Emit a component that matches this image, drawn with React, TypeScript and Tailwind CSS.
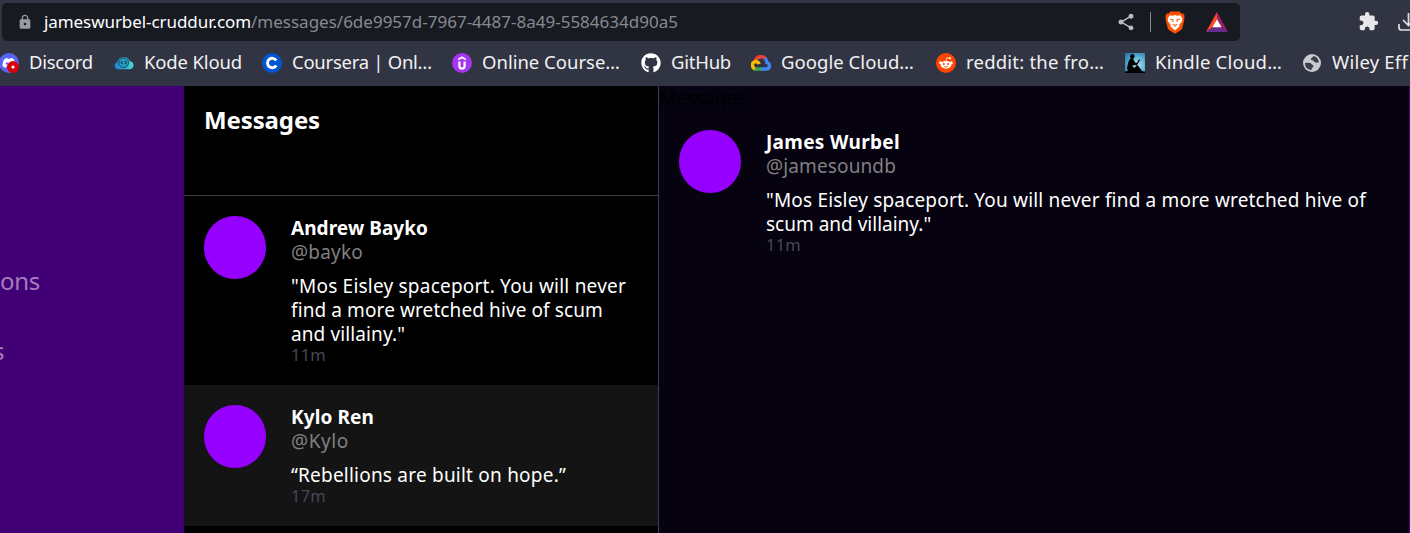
import type { ReactNode } from 'react';
import { FaDiscord, FaGithub } from 'react-icons/fa';
import { MdExtension, MdLock, MdShare } from 'react-icons/md';

function DiscordIcon() {
  return (
    <div className="relative size-5 rounded-full bg-[#5865f2]">
      <FaDiscord className="absolute top-[3px] left-[3px] size-[14px] text-white" />
      <svg className="absolute top-[8px] left-[8px] size-3" viewBox="0 0 12 12">
        <circle cx="6" cy="6" r="6" fill="#d8000c" />
        <circle cx="6" cy="6" r="1.6" fill="#fff" />
      </svg>
    </div>
  );
}

function KodeKloudIcon() {
  return (
    <svg viewBox="0 0 20 20" className="size-5">
      <defs>
        <linearGradient id="kk" x1="0" x2="1">
          <stop offset="0" stopColor="#1c86d8" />
          <stop offset="0.55" stopColor="#27a9cf" />
          <stop offset="1" stopColor="#4fe0cf" />
        </linearGradient>
      </defs>
      <path d="M3.600 16.200A3.600 3.600 0 0 1 3.200 9.200 6.600 6.600 0 0 1 15.800 8.300a4 4 0 0 1 .4 7.900Z" fill="url(#kk)" />
      <circle cx="9.700" cy="9.700" r="4.800" fill="#22a3c2" stroke="#244658" strokeWidth="1" />
      <path d="m8.700 8.200-1.500 1.500 1.500 1.500M10.800 8.200l1.500 1.500-1.500 1.500" stroke="#20394b" strokeWidth="1.100" fill="none" />
    </svg>
  );
}

function CourseraIcon() {
  return (
    <svg viewBox="0 0 20 20" className="size-5">
      <circle cx="10" cy="10" r="10" fill="#0056d2" />
      <path d="M14.200 7.500A4.700 4.700 0 1 0 14.200 12.500" stroke="#fff" strokeWidth="2.900" fill="none" />
    </svg>
  );
}

function UdemyIcon() {
  return (
    <svg viewBox="0 0 20 20" className="size-5">
      <circle cx="10" cy="10" r="10" fill="#a435f0" />
      <path d="M6.300 6.500 10 4.200l3.700 2.300" stroke="#fff" strokeWidth="1.700" fill="none" />
      <path d="M7.400 8.500v4.400a2.600 2.600 0 0 0 5.200 0V8.500" stroke="#fff" strokeWidth="2.200" fill="none" />
    </svg>
  );
}

function GoogleCloudIcon() {
  return (
    <svg viewBox="0 0 20 20" className="size-5" fill="none" strokeWidth="3.500">
      <path d="M4.400 7.600A6.100 6.100 0 0 1 14.600 5.700" stroke="#ea4335" />
      <path d="M14 5.200a6 6 0 0 1 1.800 4.200 3.400 3.400 0 0 1-.5 6.700H10" stroke="#4285f4" />
      <path d="M10.300 16.100H5.400a3.500 3.500 0 0 1-2-.6" stroke="#34a853" />
      <path d="M4 15.700A3.600 3.600 0 1 1 8.300 11" stroke="#fbbc04" />
    </svg>
  );
}

function RedditIcon() {
  return (
    <svg viewBox="0 0 20 20" className="size-5">
      <circle cx="10" cy="10" r="10" fill="#ff4500" />
      <circle cx="4.700" cy="9.700" r="1.500" fill="#fff" />
      <circle cx="15.300" cy="9.700" r="1.500" fill="#fff" />
      <ellipse cx="10" cy="11.800" rx="5.400" ry="3.900" fill="#fff" />
      <path d="m10 8.200.8-3.500 3 .6" stroke="#fff" strokeWidth=".8" fill="none" />
      <circle cx="14" cy="5.300" r="1.100" fill="#fff" />
      <circle cx="7.800" cy="11" r="1" fill="#ff4500" />
      <circle cx="12.200" cy="11" r="1" fill="#ff4500" />
      <path d="M7.800 13.400q2.200 1.400 4.400 0" stroke="#ff4500" strokeWidth=".8" fill="none" />
    </svg>
  );
}

function KindleIcon() {
  return (
    <svg viewBox="0 0 20 20" className="size-5">
      <defs>
        <radialGradient id="kd" cx=".6" cy=".6" r=".75">
          <stop offset="0" stopColor="#b5e4f2" />
          <stop offset=".5" stopColor="#62b7da" />
          <stop offset="1" stopColor="#237ba8" />
        </radialGradient>
      </defs>
      <path d="M0 0h20v20H0z" fill="url(#kd)" />
      <path d="M0 18.500q5-1.500 10-1t10 1V20H0z" />
      <circle cx="7.300" cy="3.400" r="2.300" />
      <path d="M5 5.500 3.400 9 2 15l1 3h10l4.500.6-5-6.600-3.500 3-2-2.500 3.500-.5 2.500-1.500-3-1-2-4z" />
      <path d="m11 12.500 3.600-5.800" stroke="#000" strokeWidth="1.400" />
    </svg>
  );
}

function GlobeIcon() {
  return (
    <svg viewBox="0 0 20 20" className="size-5">
      <circle cx="10" cy="10" r="9" fill="#c9cbd0" />
      <path d="M3 10c2.500-.3 5.200-.6 6.300.8s2.200.8 2 2.400-1.800 1-1.800 3.800C5 16.800 2.800 13.500 3 10ZM11.500 3C11 4.800 8.800 4.500 8.900 6.200s2.400.8 3.200 2.300 2.300 1.300 4.900.8C16.500 6 14.500 3.500 11.500 3Z" fill="#3b3e4b" />
    </svg>
  );
}

function BraveIcon() {
  return (
    <svg viewBox="0 0 20 23" className="h-[23px] w-5">
      <path d="M5.500.5h9L16.300 2.500h1.800L19.700 5l-.6 2 .4 1-2.200 9q-.4 1.500-1.600 2.300L10 22.800 4.300 19.300Q3.100 18.500 2.700 17L.5 8l.4-1-.6-2 1.600-2.500h1.800Z" fill="#ff5000" />
      <path d="M4.700 4.200 8 4.700l2-.6 2 .6 3.300-.5 2.100 3.300-.5 1.200.4 1.200-3.200 4.200.5 1.500-1.300.9L10 19.400l-3.300-2.900-1.300-.9.500-1.500-3.200-4.200.4-1.200-.5-1.200Z" fill="#fff" />
      <path d="M5 8 8.200 8.800l-.5 2.200M15 8l-3.200.8.5 2.200M7.700 13.400l2.300.9 2.300-.9M10 14.300v1.500" stroke="#ff5000" strokeWidth="1" fill="none" />
    </svg>
  );
}

function RewardsIcon() {
  return (
    <svg viewBox="0 0 22 20" className="h-5 w-[22px]">
      <path d="M11 0 0 20l7-5L11 7.500Z" fill="#ff4724" />
      <path d="M11 0 22 20l-7-5L11 7.500Z" fill="#9e1f63" />
      <path d="M0 20h22l-7-5H7Z" fill="#662d91" />
      <path d="m11 7.200 4.600 8.100H6.400Z" fill="#fff" />
    </svg>
  );
}

function Bookmark({ icon, label, className }: { icon: ReactNode; label: string; className: string }) {
  return (
    <div className={`flex shrink-0 items-center whitespace-nowrap ${className}`}>
      <span className="mr-[10px] shrink-0">{icon}</span>
      <span className="pb-[2px]">{label}</span>
    </div>
  );
}

type MessageProps = { name: ReactNode; handle: ReactNode; time: string; children: ReactNode; className?: string };

function Message({ name, handle, time, children, className = '' }: MessageProps) {
  return (
    <article className={`flex gap-[25px] p-5 ${className}`}>
      <div className="h-[63px] w-[62px] shrink-0 rounded-full bg-[#9500ff]" />
      <div className="min-w-0 flex-1 whitespace-nowrap text-[19px] leading-6 text-white">
        <div className="font-bold">{name}</div>
        <div className="mb-[10px] text-[#808080]">{handle}</div>
        {children}
        <div className="h-[19px] text-[16.5px] leading-[17px] tracking-[0.23px] text-[#464858]">{time}</div>
      </div>
    </article>
  );
}

export default function App() {
  return (
    <div className="flex h-[533px] w-[1410px] flex-col overflow-hidden bg-[#313442] font-['Noto_Sans',sans-serif]">
      <div className="flex h-[41px] shrink-0 items-end">
        <div className="ml-[2px] flex h-[38px] w-[1238px] shrink-0 items-center rounded-[5px] bg-[#181a21] text-[17px]">
          <MdLock className="ml-[15px] size-4 text-[#9a9ca4]" />
          <span className="ml-[11px] w-[207px] whitespace-nowrap tracking-[-0.071px] text-white">jameswurbel-cruddur.com</span>
          <span className="whitespace-nowrap text-[#868a92]">/messages/6de9957d-7967-4487-8a49-5584634d90a5</span>
          <div className="ml-auto flex items-center">
            <MdShare className="size-5 text-[#bcbdc0]" />
            <div className="ml-[14px] h-5 w-px bg-[#8a8c92]" />
            <div className="ml-[14px]"><BraveIcon /></div>
            <div className="mr-[12px] ml-[21px]"><RewardsIcon /></div>
          </div>
        </div>
        <MdExtension className="mb-[9px] ml-[118px] size-[21px] shrink-0 text-[#e8e8ea]" />
        <svg viewBox="0 0 20 20" className="mb-[9px] ml-[19px] size-5 shrink-0" fill="none" stroke="#e0e0e3" strokeWidth="1.700">
          <path d="M1 12v3.500Q1 18 3.500 18h13M10.500 1v12M5 8l5.500 5.500L16 8" />
        </svg>
      </div>
      <nav className="flex h-[45px] shrink-0 items-center pb-px text-[18.5px] text-[#f1f1f3]">
        <Bookmark icon={<DiscordIcon />} label="Discord" className="-ml-px w-[115px] tracking-[-0.27px]" />
        <Bookmark icon={<KodeKloudIcon />} label="Kode Kloud" className="w-[148px] tracking-[-0.15px]" />
        <Bookmark icon={<CourseraIcon />} label="Coursera | Onl…" className="w-[190px] tracking-[-0.27px]" />
        <Bookmark icon={<UdemyIcon />} label="Online Course…" className="w-[189px]" />
        <Bookmark icon={<FaGithub className="size-5 text-white" />} label="GitHub" className="w-[110px] tracking-[-0.24px]" />
        <Bookmark icon={<GoogleCloudIcon />} label="Google Cloud…" className="w-[185px] tracking-[0.05px]" />
        <Bookmark icon={<RedditIcon />} label="reddit: the fro…" className="w-[189px] tracking-[0.22px]" />
        <Bookmark icon={<KindleIcon />} label="Kindle Cloud…" className="w-[177px] tracking-[0.22px]" />
        <Bookmark icon={<GlobeIcon />} label="Wiley Eff" className="w-[120px] tracking-[0.21px]" />
      </nav>
      <main className="flex min-h-0 flex-1">
        <aside className="flex w-[184px] shrink-0 flex-col gap-[34px] bg-[#420077] pt-[177px] text-2xl leading-9 text-[#a27fbb]">
          <div className="tracking-[-0.28px]">ons</div>
          <div className="-ml-[7px]">s</div>
        </aside>
        <section className="w-[475px] shrink-0 border-r border-[#3b3d49] bg-black">
          <header className="h-[110px] border-b border-[#3b3d49] px-5 pt-[19px] text-2xl leading-[30px] font-bold tracking-[-0.12px] text-white">
            Messages
          </header>
          <Message
            name={<span className="tracking-[0.06px]">Andrew Bayko</span>}
            handle={<span className="tracking-[0.21px]">@bayko</span>}
            time="11m"
          >
            <div className="tracking-[0.216px]">"Mos Eisley spaceport. You will never</div>
            <div className="tracking-[0.1px]">find a more wretched hive of scum</div>
            <div className="tracking-[0.11px]">and villainy."</div>
          </Message>
          <Message
            className="bg-[#141414]"
            name={<span className="tracking-[0.11px]">Kylo Ren</span>}
            handle={<span className="tracking-[0.6px]">@Kylo</span>}
            time="17m"
          >
            <div className="tracking-[0.217px]">“Rebellions are built on hope.”</div>
          </Message>
        </section>
        <section className="w-[750px] shrink-0 bg-[#060210]">
          <div className="h-6 text-[19px] leading-6 tracking-[-0.16px] text-black">Messages</div>
          <Message
            name={<span className="tracking-[0.33px]">James Wurbel</span>}
            handle={<span className="tracking-[0.13px]">@jamesoundb</span>}
            time="11m"
          >
            <div className="tracking-[0.183px]">"Mos Eisley spaceport. You will never find a more wretched hive of</div>
            <div>scum and villainy."</div>
          </Message>
        </section>
        <div className="w-px shrink-0 bg-[#420077]" />
      </main>
    </div>
  );
}
